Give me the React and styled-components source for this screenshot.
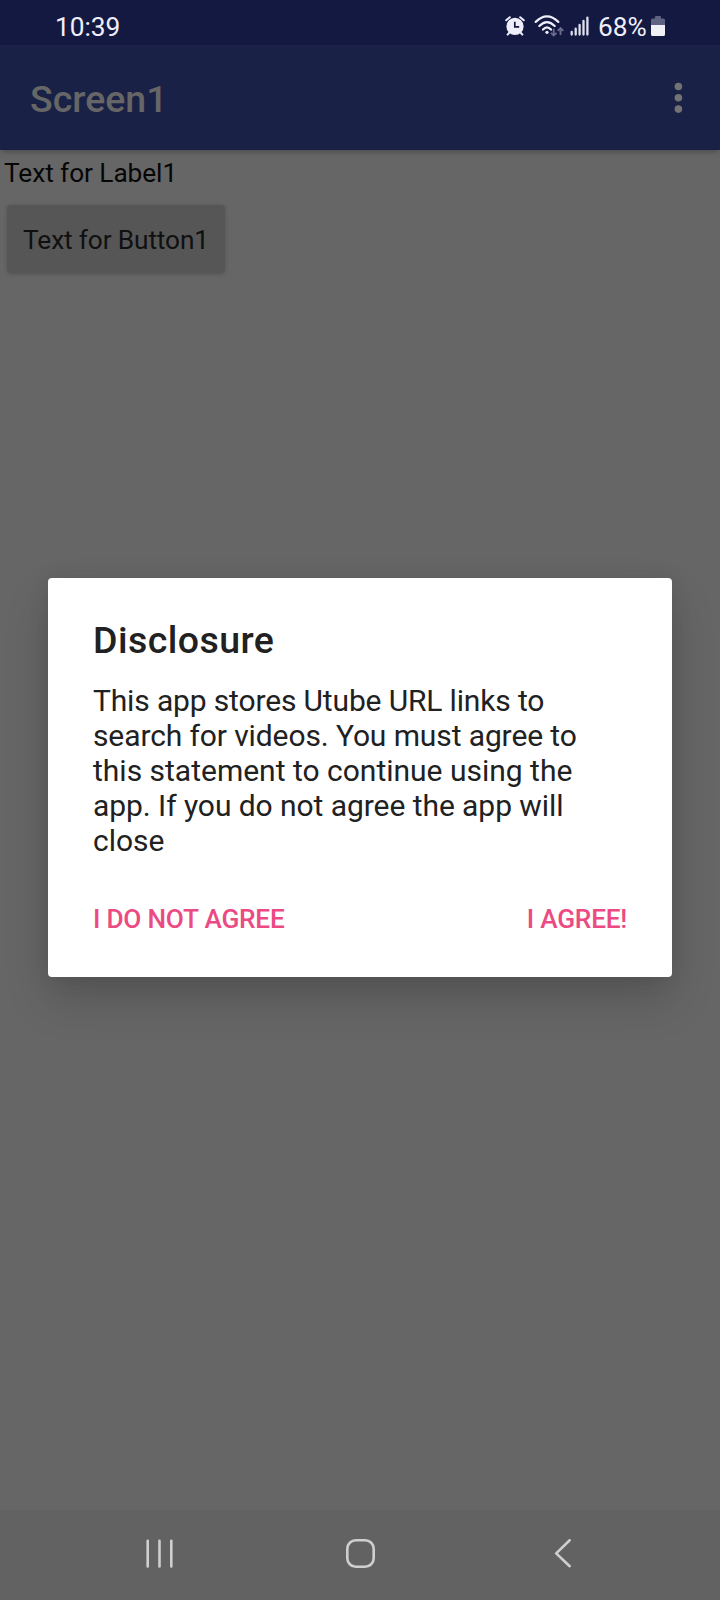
import React from "react";
import styled, { createGlobalStyle } from "styled-components";

const GlobalStyle = createGlobalStyle`
  * {
    box-sizing: border-box;
  }

  body {
    margin: 0;
    font-family: Roboto, "Liberation Sans", sans-serif;
  }
`;

const Phone = styled.div`
  display: flex;
  flex-direction: column;
  width: 720px;
  height: 1600px;
  overflow: hidden;
  background-color: #666666;
`;

const StatusBar = styled.header`
  display: flex;
  align-items: center;
  justify-content: space-between;
  height: 45px;
  padding: 9px 55px 0 55px;
  background-color: #141941;
  color: #efeffa;
  font-size: 26.25px;
  line-height: 36px;
`;

const StatusIcons = styled.div`
  display: flex;
  align-items: center;
`;

const StatusIcon = styled.svg`
  display: block;
  flex: none;
  margin-right: ${(props) => props.$gap || 0}px;
  margin-top: -2px;
`;

const Battery = styled.span`
  width: 49px;
  margin-right: 4px;
`;

const AppBar = styled.div`
  display: flex;
  align-items: center;
  justify-content: space-between;
  height: 105px;
  padding: 0 35px 0 30px;
  background-color: #1a2146;
  box-shadow: 0 4px 5px -2px rgba(0, 0, 0, 0.25);
`;

const Title = styled.h1`
  margin: 2px 0 0;
  color: #666666;
  font-size: 37.5px;
  font-weight: 500;
  line-height: 44px;
`;

const Content = styled.main`
  display: flex;
  flex: 1;
  flex-direction: column;
  align-items: flex-start;
  padding: 7px 4px;
`;

const Label = styled.p`
  margin: 0;
  color: #060606;
  font-size: 26.25px;
  letter-spacing: -0.07px;
  line-height: 32px;
`;

const Button = styled.button`
  width: 218px;
  height: 68px;
  margin: 16px 0 0 3px;
  padding: 1px 0 0;
  border: 0;
  border-radius: 4px;
  background-color: #565656;
  box-shadow: 0 1px 4px rgba(0, 0, 0, 0.2);
  color: #101010;
  font-family: inherit;
  font-size: 26.25px;
  letter-spacing: -0.13px;
`;

const Overlay = styled.div`
  position: absolute;
  top: 0;
  left: 0;
  width: 720px;
  padding: 578px 48px 0;
`;

const Dialog = styled.section`
  height: 399px;
  padding: 39px 45px 0;
  border-radius: 4px;
  background-color: #ffffff;
  box-shadow: 0 22px 44px rgba(0, 0, 0, 0.17), 0 2px 22px rgba(0, 0, 0, 0.08);
`;

const DialogTitle = styled.h2`
  margin: 0;
  color: #212121;
  font-size: 37.5px;
  font-weight: 500;
  letter-spacing: 0.45px;
  line-height: 46px;
`;

const Message = styled.p`
  margin: 20px 0 0;
  color: #212121;
  font-size: 30px;
  line-height: 35px;
`;

const Line = styled.span`
  display: block;
  letter-spacing: ${(props) => props.$spacing || 0}px;
`;

const Actions = styled.div`
  display: flex;
  justify-content: space-between;
  margin-top: 44px;
`;

const Action = styled.button`
  padding: 0;
  border: 0;
  background: none;
  color: #ec4a83;
  font-family: inherit;
  font-size: 26.25px;
  font-weight: 500;
  letter-spacing: -0.25px;
  line-height: 34px;
`;

const NavBar = styled.nav`
  display: grid;
  grid-template-columns: 202px 1fr 202px;
  align-items: center;
  justify-items: center;
  height: 90px;
  padding: 0 58px 4px;
  background-color: #626262;
`;

const NavIcon = styled.svg`
  display: block;
  fill: none;
  stroke: #cfcfcf;
  stroke-width: 2.6;
  stroke-linecap: round;
  stroke-linejoin: round;
`;

const lines = [
  { text: "This app stores Utube URL links to", spacing: -0.15 },
  { text: "search for videos. You must agree to", spacing: -0.11 },
  { text: "this statement to continue using the", spacing: 0 },
  { text: "app. If you do not agree the app will", spacing: -0.06 },
  { text: "close", spacing: 0 },
];

function AlarmIcon() {
  return (
    <StatusIcon $gap={9} width="20" height="20" viewBox="0 0 20 20">
      <circle cx="10" cy="10.4" r="8.6" fill="#efeffa" />
      <path
        d="M1.2 4.3 4.8 1.2M18.8 4.3 15.2 1.2M4.500 16.500 2.600 18.600M15.500 16.500l1.900 2.100"
        stroke="#efeffa"
        strokeWidth="2"
        strokeLinecap="round"
      />
      <path d="M9.800 5.800v5h4.400" fill="none" stroke="#141941" strokeWidth="1.700" />
    </StatusIcon>
  );
}

function WifiIcon() {
  return (
    <StatusIcon $gap={6} width="30" height="22" viewBox="0 0 30 22">
      <g fill="none" stroke="#efeffa" strokeWidth="2.2" strokeLinecap="round">
        <path d="M1.7 6.9Q13 -4.1 24.3 6.9" />
        <path d="M5.3 11Q13 3.2 20.7 11" />
        <path d="M9 14.6Q13 10.2 17 14.6" />
      </g>
      <circle cx="13" cy="17.3" r="1.6" fill="#efeffa" />
      <g fill="none" stroke="#696c8c" strokeWidth="1.8">
        <path d="M19.7 13.800v6.800M16.900 17.800l2.800 2.800 2.800-2.800" />
        <path d="M26.500 20V13M23.700 15.800l2.800-2.800 2.800 2.800" />
      </g>
    </StatusIcon>
  );
}

function SignalIcon() {
  return (
    <StatusIcon $gap={9} width="19" height="20" viewBox="0 0 19 20">
      <path
        d="M1.7 16v2.6M5.7 12.7v5.9M9.6 9v9.6M13.5 5v13.6M17.4 1.6v17"
        stroke="#dfe0ee"
        strokeWidth="2.3"
        strokeLinecap="round"
      />
    </StatusIcon>
  );
}

function BatteryIcon() {
  return (
    <StatusIcon width="14" height="20" viewBox="0 0 14 20">
      <path
        d="M4 1a1 1 0 0 1 1-1h4a1 1 0 0 1 1 1v1.500h2.500A1.500 1.500 0 0 1 14 4v5H0V4a1.500 1.500 0 0 1 1.500-1.500H4z"
        fill="#606282"
      />
      <path
        d="M0 9h14v9.500a1.500 1.500 0 0 1-1.500 1.500h-11A1.500 1.500 0 0 1 0 18.500z"
        fill="#f0f0f5"
      />
    </StatusIcon>
  );
}

function Navigation() {
  return (
    <NavBar>
      <NavIcon width="30" height="30" viewBox="0 0 30 30">
        <path d="M3.700 2.800v25.600M15.500 2.800v25.600M27.300 2.800v25.600" />
      </NavIcon>
      <NavIcon width="30" height="30" viewBox="0 0 30 30">
        <rect x="2.300" y="2.300" width="26.400" height="26.400" rx="8.500" />
      </NavIcon>
      <NavIcon width="30" height="30" viewBox="0 0 30 30">
        <path d="M23.700 2.300 10.200 15.400l13.500 12.800" />
      </NavIcon>
    </NavBar>
  );
}

function App() {
  return (
    <>
      <GlobalStyle />
      <Phone>
        <StatusBar>
          <span>10:39</span>
          <StatusIcons>
            <AlarmIcon />
            <WifiIcon />
            <SignalIcon />
            <Battery>68%</Battery>
            <BatteryIcon />
          </StatusIcons>
        </StatusBar>

        <AppBar>
          <Title>Screen1</Title>
          <svg width="12" height="32" viewBox="0 0 12 32" fill="#737373">
            <circle cx="5.400" cy="4.500" r="3.800" />
            <circle cx="5.400" cy="15.800" r="3.800" />
            <circle cx="5.400" cy="27.100" r="3.800" />
          </svg>
        </AppBar>

        <Content>
          <Label>Text for Label1</Label>
          <Button>Text for Button1</Button>
        </Content>

        <Navigation />
      </Phone>

      <Overlay>
        <Dialog role="dialog">
          <DialogTitle>Disclosure</DialogTitle>
          <Message>
            {lines.map((line) => (
              <Line key={line.text} $spacing={line.spacing}>
                {line.text}
              </Line>
            ))}
          </Message>
          <Actions>
            <Action>I DO NOT AGREE</Action>
            <Action>I AGREE!</Action>
          </Actions>
        </Dialog>
      </Overlay>
    </>
  );
}

export default App;
